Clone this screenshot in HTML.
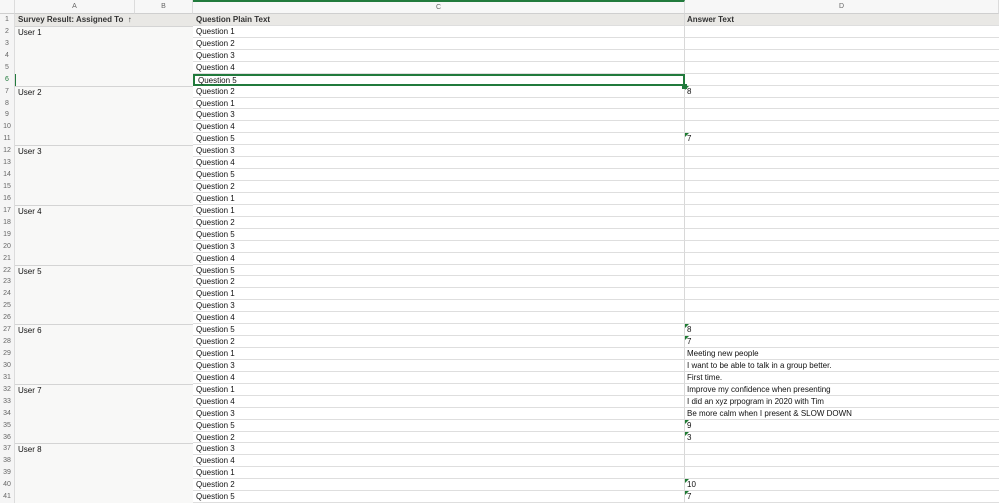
<!DOCTYPE html>
<html><head><meta charset="utf-8"><style>
*{margin:0;padding:0;box-sizing:border-box}
body{width:999px;height:504px;overflow:hidden;background:#fff;font-family:"Liberation Sans",Arial,sans-serif;font-size:8px;color:#111;position:relative}
.ch{position:absolute;top:0;height:14px;background:#f7f7f7;border-right:1px solid #dcdcdc;border-bottom:1px solid #cfcfcf;color:#666;font-size:7px;text-align:center;line-height:14px}
.r{position:absolute;left:0;width:999px;height:11.93px}
.n{position:absolute;left:0;width:15px;height:100%;background:#f5f5f5;color:#666;font-size:7px;text-align:center;line-height:12px;border-right:1px solid #dcdcdc}
.c{position:absolute;left:193px;width:492px;height:100%;border-bottom:1px solid #dedede;border-right:1px solid #d8d8d8;padding-left:3px;line-height:12px}
.d{position:absolute;left:685px;width:314px;height:100%;border-bottom:1px solid #dedede;padding-left:2px;line-height:12px}
.a{position:absolute;left:15px;width:178px;height:100%;background:#f8f8f7;padding-left:3px;line-height:12px}
.a.t{border-top:1px solid #d4d4d4}
.tri{position:absolute;left:685px;top:0;width:0;height:0;border-top:4px solid #1e7a32;border-right:4px solid transparent}
.h .a,.h .c,.h .d{background:#e9e8e5;font-weight:bold;color:#333}
</style></head><body>
<div class="ch" style="left:0;width:15px"></div>
<div class="ch" style="left:15px;width:120px">A</div>
<div class="ch" style="left:135px;width:58px">B</div>
<div class="ch" style="left:193px;width:492px;border-top:2px solid #217a3c;line-height:12px">C</div>
<div class="ch" style="left:685px;width:314px">D</div>
<div id="g" style="position:absolute;top:14px;left:0;width:999px;height:490px"></div>
<div style="position:absolute;top:14px;left:0">
<div class="r h" style="top:0px"><div class="n">1</div><div class="a">Survey Result: Assigned To &nbsp;↑</div><div class="c">Question Plain Text</div><div class="d">Answer Text</div></div>
<div class="r" style="top:11.93px"><div class="n">2</div><div class="a t">User 1</div><div class="c">Question 1</div><div class="d"></div></div>
<div class="r" style="top:23.86px"><div class="n">3</div><div class="a"></div><div class="c">Question 2</div><div class="d"></div></div>
<div class="r" style="top:35.79px"><div class="n">4</div><div class="a"></div><div class="c">Question 3</div><div class="d"></div></div>
<div class="r" style="top:47.72px"><div class="n">5</div><div class="a"></div><div class="c">Question 4</div><div class="d"></div></div>
<div class="r" style="top:59.65px"><div class="n" style="color:#217a3c">6</div><div class="a" style="border-left:1px solid #217a3c"></div><div class="c" style="border:2px solid #217a3c;line-height:9px">Question 5</div><div class="d"></div></div>
<div class="r" style="top:71.58px"><div class="n">7</div><div class="a t">User 2</div><div class="c">Question 2</div><div class="d">8</div><div class="tri"></div></div>
<div class="r" style="top:83.51px"><div class="n">8</div><div class="a"></div><div class="c">Question 1</div><div class="d"></div></div>
<div class="r" style="top:95.44px"><div class="n">9</div><div class="a"></div><div class="c">Question 3</div><div class="d"></div></div>
<div class="r" style="top:107.37px"><div class="n">10</div><div class="a"></div><div class="c">Question 4</div><div class="d"></div></div>
<div class="r" style="top:119.3px"><div class="n">11</div><div class="a"></div><div class="c">Question 5</div><div class="d">7</div><div class="tri"></div></div>
<div class="r" style="top:131.23px"><div class="n">12</div><div class="a t">User 3</div><div class="c">Question 3</div><div class="d"></div></div>
<div class="r" style="top:143.16px"><div class="n">13</div><div class="a"></div><div class="c">Question 4</div><div class="d"></div></div>
<div class="r" style="top:155.09px"><div class="n">14</div><div class="a"></div><div class="c">Question 5</div><div class="d"></div></div>
<div class="r" style="top:167.02px"><div class="n">15</div><div class="a"></div><div class="c">Question 2</div><div class="d"></div></div>
<div class="r" style="top:178.95px"><div class="n">16</div><div class="a"></div><div class="c">Question 1</div><div class="d"></div></div>
<div class="r" style="top:190.88px"><div class="n">17</div><div class="a t">User 4</div><div class="c">Question 1</div><div class="d"></div></div>
<div class="r" style="top:202.81px"><div class="n">18</div><div class="a"></div><div class="c">Question 2</div><div class="d"></div></div>
<div class="r" style="top:214.74px"><div class="n">19</div><div class="a"></div><div class="c">Question 5</div><div class="d"></div></div>
<div class="r" style="top:226.67px"><div class="n">20</div><div class="a"></div><div class="c">Question 3</div><div class="d"></div></div>
<div class="r" style="top:238.6px"><div class="n">21</div><div class="a"></div><div class="c">Question 4</div><div class="d"></div></div>
<div class="r" style="top:250.53px"><div class="n">22</div><div class="a t">User 5</div><div class="c">Question 5</div><div class="d"></div></div>
<div class="r" style="top:262.46px"><div class="n">23</div><div class="a"></div><div class="c">Question 2</div><div class="d"></div></div>
<div class="r" style="top:274.39px"><div class="n">24</div><div class="a"></div><div class="c">Question 1</div><div class="d"></div></div>
<div class="r" style="top:286.32px"><div class="n">25</div><div class="a"></div><div class="c">Question 3</div><div class="d"></div></div>
<div class="r" style="top:298.25px"><div class="n">26</div><div class="a"></div><div class="c">Question 4</div><div class="d"></div></div>
<div class="r" style="top:310.18px"><div class="n">27</div><div class="a t">User 6</div><div class="c">Question 5</div><div class="d">8</div><div class="tri"></div></div>
<div class="r" style="top:322.11px"><div class="n">28</div><div class="a"></div><div class="c">Question 2</div><div class="d">7</div><div class="tri"></div></div>
<div class="r" style="top:334.04px"><div class="n">29</div><div class="a"></div><div class="c">Question 1</div><div class="d">Meeting new people</div></div>
<div class="r" style="top:345.97px"><div class="n">30</div><div class="a"></div><div class="c">Question 3</div><div class="d">I want to be able to talk in a group better.</div></div>
<div class="r" style="top:357.9px"><div class="n">31</div><div class="a"></div><div class="c">Question 4</div><div class="d">First time.</div></div>
<div class="r" style="top:369.83px"><div class="n">32</div><div class="a t">User 7</div><div class="c">Question 1</div><div class="d">Improve my confidence when presenting</div></div>
<div class="r" style="top:381.76px"><div class="n">33</div><div class="a"></div><div class="c">Question 4</div><div class="d">I did an xyz prpogram in 2020 with Tim</div></div>
<div class="r" style="top:393.69px"><div class="n">34</div><div class="a"></div><div class="c">Question 3</div><div class="d">Be more calm when I present &amp; SLOW DOWN</div></div>
<div class="r" style="top:405.62px"><div class="n">35</div><div class="a"></div><div class="c">Question 5</div><div class="d">9</div><div class="tri"></div></div>
<div class="r" style="top:417.55px"><div class="n">36</div><div class="a"></div><div class="c">Question 2</div><div class="d">3</div><div class="tri"></div></div>
<div class="r" style="top:429.48px"><div class="n">37</div><div class="a t">User 8</div><div class="c">Question 3</div><div class="d"></div></div>
<div class="r" style="top:441.41px"><div class="n">38</div><div class="a"></div><div class="c">Question 4</div><div class="d"></div></div>
<div class="r" style="top:453.34px"><div class="n">39</div><div class="a"></div><div class="c">Question 1</div><div class="d"></div></div>
<div class="r" style="top:465.27px"><div class="n">40</div><div class="a"></div><div class="c">Question 2</div><div class="d">10</div><div class="tri"></div></div>
<div class="r" style="top:477.2px"><div class="n">41</div><div class="a"></div><div class="c">Question 5</div><div class="d">7</div><div class="tri"></div></div>
</div>
<div style="position:absolute;left:682px;top:84px;width:5px;height:5px;background:#217a3c"></div>
</body></html>
